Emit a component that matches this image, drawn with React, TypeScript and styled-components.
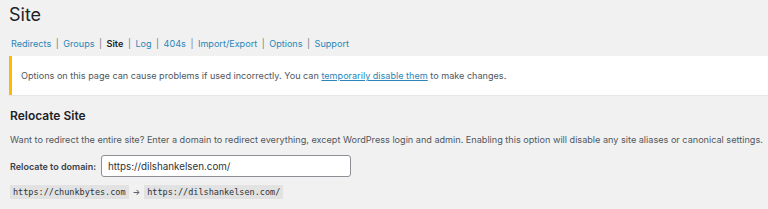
import React from 'react';
import styled, { createGlobalStyle } from 'styled-components';

const tabs = ['Redirects', 'Groups', 'Site', 'Log', '404s', 'Import/Export', 'Options', 'Support'];

const App: React.FC = () => {
  return (
    <>
      <GlobalStyle />
      <Page>
        <Title>Site</Title>
        <Nav>
          {tabs.map((tab, i) => (
            <NavItem key={tab}>
              {tab === 'Site' ? <Current>{tab}</Current> : <NavLink href="#">{tab}</NavLink>}
              {i < tabs.length - 1 && <Sep>|</Sep>}
            </NavItem>
          ))}
        </Nav>
        <Notice>
          <span>
            Options on this page can cause problems if used incorrectly. You can{' '}
            <InlineLink href="#">temporarily disable them</InlineLink> to make changes.
          </span>
        </Notice>
        <SectionTitle>Relocate Site</SectionTitle>
        <Description>
          Want to redirect the entire site? Enter a domain to redirect everything, except WordPress login and
          admin. Enabling this option will disable any site aliases or canonical settings.
        </Description>
        <FieldRow>
          <FieldLabel>Relocate to domain:</FieldLabel>
          <DomainInput defaultValue="https://dilshankelsen.com/" />
        </FieldRow>
        <Example>
          <Code>https://chunkbytes.com</Code>
          <Arrow>→</Arrow>
          <Code>https://dilshankelsen.com/</Code>
        </Example>
      </Page>
    </>
  );
};

export default App;

const GlobalStyle = createGlobalStyle`
  html, body {
    margin: 0;
    background: #f1f1f1;
  }
  body {
    font-family: Inter, "Liberation Sans", sans-serif;
    color: #3c434a;
  }
`;

const Page = styled.div`
  width: 768px;
  height: 209px;
  overflow: hidden;
  padding-left: 9px;
  box-sizing: border-box;
`;

const Title = styled.h1`
  margin: 0;
  padding-top: 4px;
  font-size: 18px;
  font-weight: 400;
  line-height: 22px;
  color: #1d2327;
`;

const Nav = styled.div`
  display: flex;
  margin-top: 11px;
  padding-left: 2px;
  font-size: 9.1px;
  line-height: 14px;
`;

const NavItem = styled.span`
  display: inline-flex;
`;

const NavLink = styled.a`
  color: #2a86b8;
  text-decoration: none;
`;

const Current = styled.span`
  color: #1d2327;
  font-weight: 600;
`;

const Sep = styled.span`
  color: #787c82;
  margin: 0 4.5px;
`;

const Notice = styled.div`
  margin-top: 5px;
  height: 39px;
  display: flex;
  align-items: center;
  background: #fff;
  border-left: 3px solid #ffb900;
  padding-left: 9px;
  font-size: 9.1px;
  color: #50575e;
  box-shadow: 0 1px 1px rgba(0, 0, 0, 0.04);
`;

const InlineLink = styled.a`
  color: #2a86b8;
  text-decoration: underline;
`;

const SectionTitle = styled.h2`
  margin: 13px 0 0 1px;
  font-size: 12px;
  font-weight: 600;
  line-height: 16px;
  color: #1d2327;
`;

const Description = styled.p`
  margin: 9px 0 0 1px;
  font-size: 9.12px;
  line-height: 14px;
  color: #50575e;
  white-space: nowrap;
`;

const FieldRow = styled.div`
  display: flex;
  align-items: center;
  gap: 5px;
  margin-top: 8px;
  padding-left: 1px;
`;

const FieldLabel = styled.label`
  font-size: 9px;
  font-weight: 600;
  color: #3c434a;
`;

const DomainInput = styled.input`
  width: 250px;
  height: 22px;
  box-sizing: border-box;
  border: 1px solid #8c8f94;
  border-radius: 3px;
  padding: 0 6px;
  font-family: Inter, "Liberation Sans", sans-serif;
  font-size: 9.8px;
  color: #2c3338;
  background: #fff;
  outline: none;
`;

const Example = styled.div`
  display: flex;
  align-items: center;
  gap: 4px;
  margin-top: 8px;
  padding-left: 1px;
`;

const Code = styled.code`
  font-family: "DejaVu Sans Mono", "Liberation Mono", monospace;
  font-size: 8.5px;
  line-height: 14px;
  padding: 0 3px;
  background: #e2e2e2;
  color: #2c3338;
`;

const Arrow = styled.span`
  font-size: 8px;
  color: #3c434a;
`;
